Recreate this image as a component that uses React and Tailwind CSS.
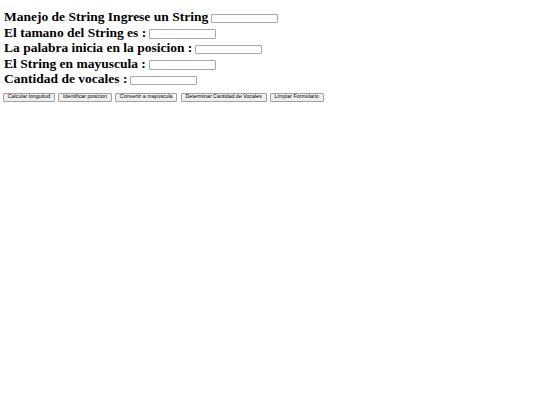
import React from "react";

function Campo({ label }) {
  return (
    <div className="flex items-end h-[15.5px]">
      <span className="leading-[15.5px]">{label}</span>
      <input
        type="text"
        className="ml-[3px] mb-[1.5px] w-[67px] h-[9.5px] border border-[#a8a8a8] bg-white rounded-[1px] outline-none"
      />
    </div>
  );
}

function Boton({ children }) {
  return (
    <button className="h-[9px] px-[3.8px] border border-[#a0a0a0] bg-[#efefef] rounded-[1px] text-[5.3px] leading-none text-black font-['Liberation_Sans',Arial,sans-serif]">
      {children}
    </button>
  );
}

export default function App() {
  return (
    <div className="w-[540px] h-[405px] bg-white pt-[9px] px-[4px]">
      <div className="font-['Liberation_Serif','Times_New_Roman',serif] font-bold text-[13.5px] text-black">
        <Campo label="Manejo de String Ingrese un String" />
        <Campo label="El tamano del String es :" />
        <Campo label="La palabra inicia en la posicion :" />
        <Campo label="El String en mayuscula :" />
        <Campo label="Cantidad de vocales :" />
      </div>
      <div className="flex gap-[3.3px] mt-[6px] -ml-[1px]">
        <Boton>Calcular longuitud</Boton>
        <Boton>Identificar posicion</Boton>
        <Boton>Convertir a mayuscula</Boton>
        <Boton>Determinar Cantidad de Vocales</Boton>
        <Boton>Limpiar Formulario</Boton>
      </div>
    </div>
  );
}
